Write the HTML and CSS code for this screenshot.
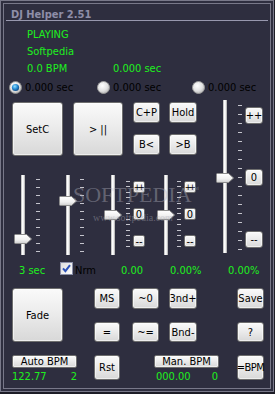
FILE: index.html
```html
<!DOCTYPE html>
<html>
<head>
<meta charset="utf-8">
<title>DJ Helper 2.51</title>
<link rel="stylesheet" href="styles.css">
</head>
<body>
<svg class="defs" width="0" height="0" aria-hidden="true">
  <defs>
    <linearGradient id="thumbGrad" x1="0" y1="0" x2="0" y2="1">
      <stop offset="0" stop-color="#ffffff"/>
      <stop offset="0.6" stop-color="#f0f0f0"/>
      <stop offset="1" stop-color="#cfcfcf"/>
    </linearGradient>
    <radialGradient id="radioGrad" cx="0.4" cy="0.35" r="0.7">
      <stop offset="0" stop-color="#ffffff"/>
      <stop offset="0.6" stop-color="#e2e2e2"/>
      <stop offset="1" stop-color="#b4b4b4"/>
    </radialGradient>
    <radialGradient id="radioDot" cx="0.4" cy="0.35" r="0.7">
      <stop offset="0" stop-color="#8fe0ff"/>
      <stop offset="0.5" stop-color="#2a8fd6"/>
      <stop offset="1" stop-color="#0a3f78"/>
    </radialGradient>
    <linearGradient id="checkGrad" x1="0" y1="0" x2="1" y2="1">
      <stop offset="0" stop-color="#dcdcdc"/>
      <stop offset="1" stop-color="#ffffff"/>
    </linearGradient>
  </defs>
</svg>
<div class="window">
  <div class="panel">
    <div class="title">DJ Helper 2.51</div>

    <div class="status">
      <div>PLAYING</div>
      <div>Softpedia</div>
      <div class="status-row"><span class="bpm">0.0 BPM</span><span>0.000 sec</span></div>
    </div>

    <div class="radios">
      <div class="radio">
        <svg width="13" height="13" viewBox="0 0 13 13"><circle cx="6.5" cy="6.5" r="6" fill="url(#radioGrad)" stroke="#8a8a8a"/><circle cx="6.5" cy="6.5" r="3.6" fill="url(#radioDot)"/></svg>
        <span>0.000 sec</span>
      </div>
      <div class="radio">
        <svg width="13" height="13" viewBox="0 0 13 13"><circle cx="6.5" cy="6.5" r="6" fill="url(#radioGrad)" stroke="#9a9a9a"/></svg>
        <span>0.000 sec</span>
      </div>
      <div class="radio">
        <svg width="13" height="13" viewBox="0 0 13 13"><circle cx="6.5" cy="6.5" r="6" fill="url(#radioGrad)" stroke="#9a9a9a"/></svg>
        <span>0.000 sec</span>
      </div>
    </div>

    <div class="deck">
      <div class="mixer">
        <div class="top-buttons">
          <div class="btn big">SetC</div>
          <div class="btn big play">&gt; ||</div>
          <div class="cue-grid">
            <div class="btn">C+P</div>
            <div class="btn">Hold</div>
            <div class="btn">B&lt;</div>
            <div class="btn">&gt;B</div>
          </div>
        </div>

        <div class="faders">
          <div class="group g1">
            <div class="fader">
              <div class="track"></div>
              <svg class="thumb" style="top:59px" width="18" height="10" viewBox="0 0 18 10"><path d="M1.5 .5H12.5L17.5 5L12.5 9.5H1.5A1 1 0 0 1 .5 8.5V1.5A1 1 0 0 1 1.5 .5Z" fill="url(#thumbGrad)" stroke="#8c8c8c"/></svg>
            </div>
            <div class="ticks wide"></div>
          </div>
          <div class="group g2">
            <div class="fader">
              <div class="track"></div>
              <svg class="thumb" style="top:21px" width="18" height="10" viewBox="0 0 18 10"><path d="M1.5 .5H12.5L17.5 5L12.5 9.5H1.5A1 1 0 0 1 .5 8.5V1.5A1 1 0 0 1 1.5 .5Z" fill="url(#thumbGrad)" stroke="#8c8c8c"/></svg>
            </div>
            <div class="ticks wide"></div>
          </div>
          <div class="group g3">
            <div class="fader">
              <div class="track"></div>
              <svg class="thumb" style="top:35px" width="18" height="10" viewBox="0 0 18 10"><path d="M1.5 .5H12.5L17.5 5L12.5 9.5H1.5A1 1 0 0 1 .5 8.5V1.5A1 1 0 0 1 1.5 .5Z" fill="url(#thumbGrad)" stroke="#8c8c8c"/></svg>
            </div>
            <div class="ticks fine"></div>
            <div class="mini-col">
              <div class="btn mini tight">++</div>
              <div class="btn mini">0</div>
              <div class="btn mini">--</div>
            </div>
          </div>
          <div class="group g4">
            <div class="fader">
              <div class="track"></div>
              <svg class="thumb" style="top:35px" width="18" height="10" viewBox="0 0 18 10"><path d="M1.5 .5H12.5L17.5 5L12.5 9.5H1.5A1 1 0 0 1 .5 8.5V1.5A1 1 0 0 1 1.5 .5Z" fill="url(#thumbGrad)" stroke="#8c8c8c"/></svg>
            </div>
            <div class="ticks fine"></div>
            <div class="mini-col">
              <div class="btn mini tight">++</div>
              <div class="btn mini">0</div>
              <div class="btn mini">--</div>
            </div>
          </div>
        </div>
      </div>

      <div class="master">
        <div class="fader tall">
          <div class="track"></div>
          <svg class="thumb" style="top:73px" width="18" height="10" viewBox="0 0 18 10"><path d="M1.5 .5H12.5L17.5 5L12.5 9.5H1.5A1 1 0 0 1 .5 8.5V1.5A1 1 0 0 1 1.5 .5Z" fill="url(#thumbGrad)" stroke="#8c8c8c"/></svg>
        </div>
        <div class="ticks master-ticks"></div>
        <div class="master-col">
          <div class="btn pitch">++</div>
          <div class="btn pitch">0</div>
          <div class="btn pitch">--</div>
        </div>
      </div>
    </div>

    <div class="labels">
      <span>3 sec</span>
      <span class="check">
        <svg width="13" height="13" viewBox="0 0 13 13"><rect x=".5" y=".5" width="12" height="12" fill="url(#checkGrad)" stroke="#8a8fa8"/><path d="M3 6.3L5.4 9.2L10 3.2" fill="none" stroke="#2d52b8" stroke-width="2"/></svg>
        <span class="nrm">Nrm</span>
      </span>
      <span>0.00</span>
      <span>0.00%</span>
      <span>0.00%</span>
    </div>

    <div class="bottom">
      <div class="btn fade">Fade</div>
      <div class="btn c3 r1">MS</div>
      <div class="btn c5 r1">~0</div>
      <div class="btn c7 r1">3nd+</div>
      <div class="btn c9 r1">Save</div>
      <div class="btn c3 r2">=</div>
      <div class="btn c5 r2">~=</div>
      <div class="btn c7 r2">Bnd-</div>
      <div class="btn c9 r2">?</div>

      <div class="bpm-block auto">
        <div class="btn bpm-btn">Auto BPM</div>
        <div class="bpm-values"><span>122.77</span><span>2</span></div>
      </div>
      <div class="btn c3 r3">Rst</div>
      <div class="bpm-block manual">
        <div class="btn bpm-btn">Man. BPM</div>
        <div class="bpm-values"><span>000.00</span><span>0</span></div>
      </div>
      <div class="btn c9 r3 narrow">=BPM</div>
    </div>

    <div class="watermark">
      <div class="wm-main">SOFTPEDIA<span class="tm">™</span></div>
      <div class="wm-url">www.softpedia.com</div>
    </div>
  </div>
</div>
</body>
</html>
```

FILE: styles.css
```css
* { box-sizing: border-box; }

html, body { margin: 0; padding: 0; }

body {
  width: 275px;
  height: 394px;
  overflow: hidden;
  background: #1c1c26;
  font-family: "DejaVu Sans Condensed", "DejaVu Sans", sans-serif;
  font-stretch: condensed;
  font-size: 11px;
  color: #000;
}

.defs { position: absolute; width: 0; height: 0; }

.window {
  width: 274px;
  height: 392px;
  border: 1px solid #787889;
  padding: 2px;
  background: #2e2e3f;
}

.panel {
  position: relative;
  height: 100%;
  border: 1px solid #787889;
}

.title {
  margin: 0 2px;
  height: 17px;
  padding: 5px 0 0 5px;
  line-height: 11px;
  border-bottom: 1px solid #9898ae;
  color: #8e8ea8;
  font-weight: bold;
}

.status {
  margin-top: 5px;
  padding-left: 23px;
  line-height: 17px;
  color: #1ef01e;
}

.status-row { display: flex; }
.status-row .bpm { width: 86px; }

.radios {
  margin-top: 2px;
  height: 17px;
  padding-left: 5px;
  display: grid;
  grid-template-columns: 88px 95px auto;
  line-height: 17px;
}

.radio {
  display: flex;
  align-items: center;
  gap: 3px;
}

.deck {
  margin-top: 4px;
  height: 156px;
  display: flex;
}

.mixer { width: 212px; }

.btn {
  display: flex;
  align-items: center;
  justify-content: center;
  border: 1px solid #6e6e6e;
  border-radius: 3px;
  background: linear-gradient(#fafafa, #ececec 45%, #d8d8d8);
  box-shadow: inset 0 0 0 1px rgba(255, 255, 255, 0.55);
  color: #000;
  white-space: nowrap;
  line-height: 1;
}

.top-buttons {
  margin: 2px 0 0 8px;
  height: 54px;
  display: flex;
  gap: 10px;
}

.big { width: 51px; height: 54px; }
.big.play { width: 50px; }

.cue-grid {
  display: grid;
  grid-template-columns: 27px 28px;
  grid-template-rows: 21px 21px;
  column-gap: 9px;
  row-gap: 11px;
}

.faders {
  margin-top: 19px;
  height: 80px;
  display: flex;
}

.group { display: flex; height: 80px; }
.g1 { margin-left: 10px; gap: 4px; }
.g2 { margin-left: 19px; gap: 3px; }
.g3 { margin-left: 20px; gap: 4px; }
.g3 .mini-col { margin-left: -1px; }
.g4 { margin-left: 12px; gap: 2px; }
.g4 .mini-col { margin-left: 1px; }

.fader {
  position: relative;
  width: 18px;
  height: 80px;
  display: flex;
  justify-content: center;
}

.fader.tall { height: 153px; }

.track {
  width: 4px;
  height: 100%;
  background: linear-gradient(to right, #a8a8a8, #ffffff 35%, #ececec 70%, #9a9a9a);
}

.thumb {
  position: absolute;
  left: 0;
  display: block;
}

.ticks {
  width: 4px;
  background-repeat: repeat-y;
}

.ticks.wide {
  margin-top: 4px;
  height: 73px;
  background-image: repeating-linear-gradient(to bottom, #c4c4cc 0 1px, transparent 1px 8px);
}

.ticks.fine {
  margin-top: 6px;
  height: 70px;
  background-image: repeating-linear-gradient(to bottom, #c4c4cc 0 1px, transparent 1px 5.4px);
}

.mini-col {
  padding-top: 6px;
  display: flex;
  flex-direction: column;
  gap: 15px;
}

.mini {
  width: 12px;
  height: 12px;
  border-radius: 2px;
}

.mini.tight {
  font-size: 9px;
  letter-spacing: -2.5px;
  padding-right: 2px;
}

.master {
  display: flex;
  gap: 4px;
}

.master-ticks {
  margin-top: 5px;
  height: 145px;
  background-image: repeating-linear-gradient(to bottom, #c4c4cc 0 1px, transparent 1px 9px);
}

.master-col {
  margin-left: -1px;
  padding-top: 7px;
  display: flex;
  flex-direction: column;
  gap: 45px;
}

.pitch { width: 18px; height: 17px; }

.labels {
  margin-top: 6px;
  padding-left: 15px;
  height: 17px;
  display: grid;
  grid-template-columns: 41px 61px 49px 58px auto;
  line-height: 17px;
  color: #1ef01e;
}

.check {
  display: flex;
  align-items: center;
  gap: 2px;
}

.check svg { margin-bottom: 4px; }

.nrm { color: #000; }

.bottom {
  margin-top: 9px;
  padding-left: 8px;
  display: grid;
  grid-template-columns: 51px 31px 26px 12px 27px 10px 28px 40px 27px;
  grid-template-rows: 21px 20px 25px;
  row-gap: 13px;
}

.fade { grid-column: 1; grid-row: 1 / 3; }
.c3 { grid-column: 3; }
.c5 { grid-column: 5; }
.c7 { grid-column: 7; }
.c9 { grid-column: 9; }
.r1 { grid-row: 1; }
.r2 { grid-row: 2; }
.r3 { grid-row: 3; }

.narrow { letter-spacing: -0.5px; }

.bpm-block { grid-row: 3; }
.bpm-block.auto { grid-column: 1 / 3; }
.bpm-block.manual { grid-column: 5 / 9; padding-left: 22px; }

.bpm-btn {
  width: 65px;
  height: 13px;
  border-radius: 2px;
}

.bpm-values {
  width: 65px;
  margin-top: 3px;
  display: flex;
  justify-content: space-between;
  line-height: 11px;
  color: #1ef01e;
}

.manual .bpm-values { padding: 0 1px 0 2px; }

.watermark {
  position: absolute;
  left: 69px;
  top: 175px;
  color: rgba(175, 175, 188, 0.42);
  font-family: "Liberation Serif", serif;
  pointer-events: none;
}

.wm-main {
  font-size: 22px;
  line-height: 22px;
  letter-spacing: 0;
}

.tm {
  font-size: 8px;
  vertical-align: 10px;
}

.wm-url {
  margin: 6px 0 0 20px;
  font-size: 10px;
  line-height: 12px;
}
```
